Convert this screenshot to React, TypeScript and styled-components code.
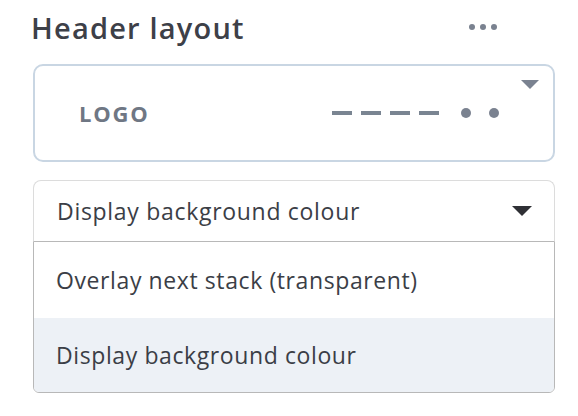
import React from "react";
import styled, { createGlobalStyle } from "styled-components";

const GlobalStyle = createGlobalStyle`
  body {
    margin: 0;
    background: #ffffff;
    font-family: "Open Sans", "Noto Sans", sans-serif;
    color: #3b3e46;
  }
`;

const Panel = styled.div`
  width: 578px;
  padding: 0 23px 0 33px;
  box-sizing: border-box;
`;

const HeaderRow = styled.div`
  display: flex;
  align-items: center;
  justify-content: space-between;
  height: 54px;
  padding-right: 58px;
  margin-left: -2px;
`;

const Title = styled.h2`
  margin: 0;
  font-size: 29px;
  font-weight: 600;
  letter-spacing: 1.2px;
  color: #3d4048;
`;

const MoreButton = styled.div`
  display: flex;
  gap: 5px;
`;

const Dot = styled.span<{ size: number }>`
  width: ${({ size }) => size}px;
  height: ${({ size }) => size}px;
  border-radius: 50%;
  background: #7a8290;
`;

const Preview = styled.div`
  position: relative;
  margin-top: 10px;
  height: 98px;
  border: 2px solid #c9d6e3;
  border-radius: 10px;
  box-sizing: border-box;
  display: flex;
  align-items: center;
  justify-content: space-between;
  padding: 0 54px 0 44px;
`;

const Logo = styled.span`
  font-size: 22px;
  font-weight: 700;
  color: #6f7784;
  letter-spacing: 1.8px;
`;

const NavSketch = styled.div`
  display: flex;
  align-items: center;
  gap: 9px;
`;

const Dash = styled.span`
  width: 20px;
  height: 4px;
  background: #7a8592;
`;

const NavDots = styled.div`
  display: flex;
  gap: 18px;
  margin-left: 13px;
`;

const Corner = styled.span`
  position: absolute;
  top: 14px;
  right: 14px;
  width: 0;
  height: 0;
  border-left: 9px solid transparent;
  border-right: 9px solid transparent;
  border-top: 9px solid #7a8290;
`;

const SelectBox = styled.div`
  margin-top: 18px;
  height: 61px;
  border: 1px solid #dcdcdc;
  border-bottom: none;
  border-radius: 8px 8px 0 0;
  box-sizing: border-box;
  display: flex;
  align-items: center;
  justify-content: space-between;
  padding: 0 22px 0 23px;
  font-size: 23px;
  letter-spacing: 0.7px;
  color: #3b3e46;
`;

const Caret = styled.span`
  width: 0;
  height: 0;
  border-left: 10px solid transparent;
  border-right: 10px solid transparent;
  border-top: 10px solid #2f3035;
`;

const OptionList = styled.div`
  border: 1px solid #b8b8b8;
  border-radius: 0 0 6px 6px;
  overflow: hidden;
`;

const Option = styled.div<{ active?: boolean }>`
  height: ${({ active }) => (active ? 74 : 76)}px;
  display: flex;
  align-items: center;
  padding-left: 22px;
  font-size: 23px;
  letter-spacing: 0.6px;
  color: #3b3e46;
  background: ${({ active }) => (active ? "#edf1f6" : "#ffffff")};
`;

export default function App() {
  return (
    <>
      <GlobalStyle />
      <Panel>
        <HeaderRow>
          <Title>Header layout</Title>
          <MoreButton>
            <Dot size={6} />
            <Dot size={6} />
            <Dot size={6} />
          </MoreButton>
        </HeaderRow>
        <Preview>
          <Logo>LOGO</Logo>
          <NavSketch>
            <Dash />
            <Dash />
            <Dash />
            <Dash />
            <NavDots>
              <Dot size={10} />
              <Dot size={10} />
            </NavDots>
          </NavSketch>
          <Corner />
        </Preview>
        <SelectBox>
          <span>Display background colour</span>
          <Caret />
        </SelectBox>
        <OptionList>
          <Option>Overlay next stack (transparent)</Option>
          <Option active>Display background colour</Option>
        </OptionList>
      </Panel>
    </>
  );
}
